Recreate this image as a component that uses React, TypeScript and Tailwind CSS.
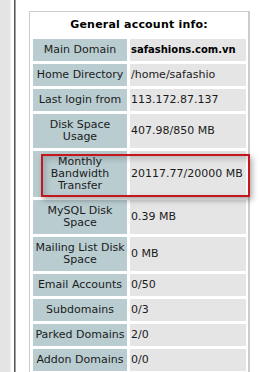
import React from "react";

const rows: { label: string[]; value: string; bold?: boolean }[] = [
  { label: ["Main Domain"], value: "safashions.com.vn", bold: true },
  { label: ["Home Directory"], value: "/home/safashio" },
  { label: ["Last login from"], value: "113.172.87.137" },
  { label: ["Disk Space", "Usage"], value: "407.98/850 MB" },
  { label: ["Monthly", "Bandwidth", "Transfer"], value: "20117.77/20000 MB" },
  { label: ["MySQL Disk", "Space"], value: "0.39 MB" },
  { label: ["Mailing List Disk", "Space"], value: "0 MB" },
  { label: ["Email Accounts"], value: "0/50" },
  { label: ["Subdomains"], value: "0/3" },
  { label: ["Parked Domains"], value: "2/0" },
  { label: ["Addon Domains"], value: "0/0" },
];

export default function App() {
  return (
    <div
      className="relative flex w-[261px] h-[372px] overflow-hidden bg-white text-[#1b1b1b]"
      style={{ fontFamily: '"DejaVu Sans", Verdana, sans-serif' }}
    >
      <div className="w-[10px] shrink-0 bg-[#e4e4e4]" />
      <div className="w-[1px] shrink-0 bg-[#efefef]" />
      <div className="w-[3px] shrink-0 bg-white" />
      <div className="w-[1px] shrink-0 bg-[#555555]" />
      <div className="w-[1px] shrink-0 bg-[#a0a0a0]" />
      <div className="ml-[13px] mt-[11px] w-[221px] shrink-0 self-start border border-[#cccccc] border-r-2 p-[3px] flex flex-col gap-[3px]">
        <div className="h-[21px] flex items-center justify-center text-[11px] font-bold tracking-[0.2px] text-black">
          General account info:
        </div>
        {rows.map((r, i) => (
          <div key={i} className="grid grid-cols-[94px_116px] gap-[3px]">
            <div className="bg-[#b9cdd1] py-[5px] text-center text-[11px] leading-[12px] whitespace-nowrap">
              {r.label.map((l, j) => (
                <div key={j}>{l}</div>
              ))}
            </div>
            <div
              className={
                "bg-[#e5e5e5] pl-[1px] flex items-center whitespace-nowrap leading-[12px] " +
                (r.bold ? "font-bold text-[10px] text-black" : "text-[11px]")
              }
            >
              {r.value}
            </div>
          </div>
        ))}
      </div>
      <div className="absolute left-[41px] top-[154px] w-[209px] h-[43px] border-2 border-[#c4161c] shadow-[2px_3px_6px_rgba(0,0,0,0.35),inset_3px_3px_6px_rgba(0,0,0,0.18)]" />
    </div>
  );
}
